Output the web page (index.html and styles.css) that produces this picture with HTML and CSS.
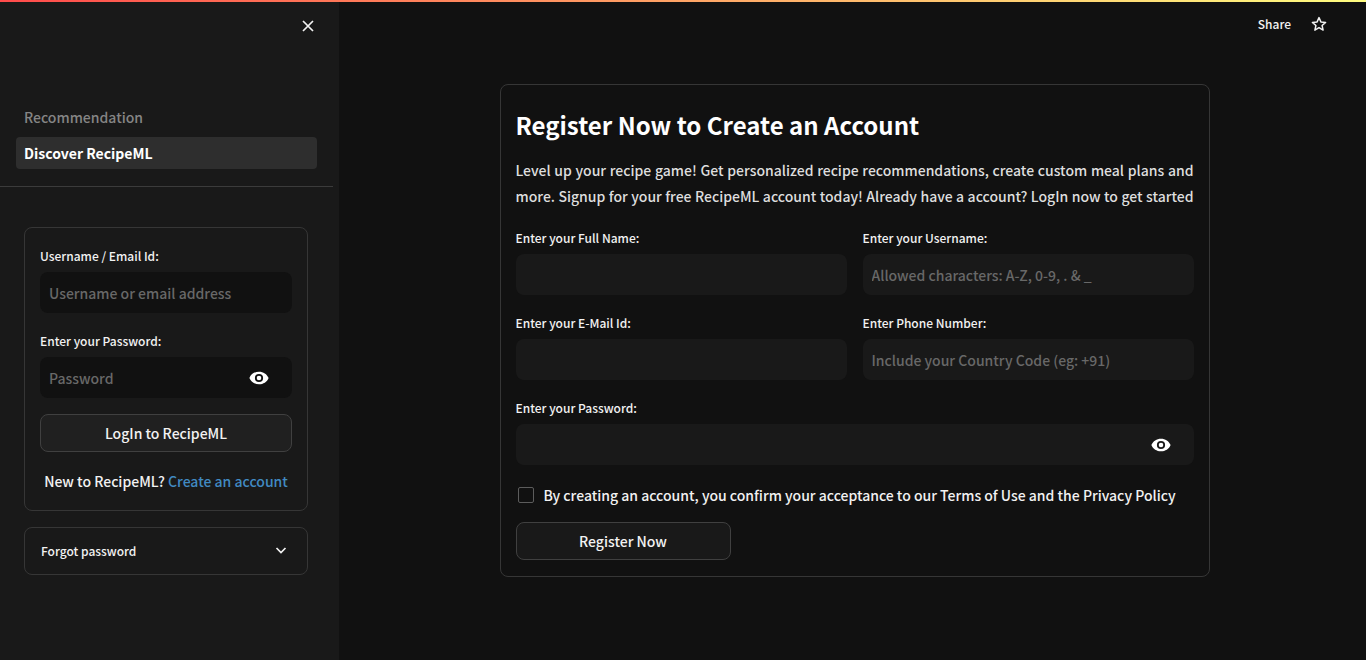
FILE: index.html
```html
<!DOCTYPE html>
<html lang="en">
<head>
<meta charset="utf-8">
<meta name="viewport" content="width=device-width, initial-scale=1">
<title>RecipeML</title>
<link rel="stylesheet" href="styles.css">
</head>
<body>
<div class="accent"></div>
<div class="app">
  <aside class="sidebar">
    <button class="close" type="button" aria-label="Close sidebar">
      <svg viewBox="0 0 12 12" width="12" height="12"><path d="M1 1l10 10M11 1L1 11" fill="none" stroke="currentColor" stroke-width="1.7"/></svg>
    </button>
    <nav class="nav">
      <a class="nav-link" href="#">Recommendation</a>
      <a class="nav-link nav-link-active" href="#">Discover RecipeML</a>
    </nav>
    <div class="sidebar-body">
      <form class="card login">
        <div class="field">
          <label for="login-user">Username / Email Id:</label>
          <input class="text-input" id="login-user" type="text" placeholder="Username or email address">
        </div>
        <div class="field">
          <label for="login-pass">Enter your Password:</label>
          <div class="text-input password">
            <input id="login-pass" type="password" placeholder="Password">
            <button class="eye" type="button" aria-label="Show password">
              <svg viewBox="0 0 20 14" width="20" height="14"><path fill="currentColor" fill-rule="evenodd" d="M10 .7C5.700 .7 2 3 .4 7 2 11 5.700 13.300 10 13.300s8-2.300 9.600-6.300C18 3 14.300 .7 10 .7zM10 11.100a4.100 4.100 0 1 1 0-8.200 4.100 4.100 0 0 1 0 8.200zM10 4.700a2.300 2.300 0 1 0 0 4.600 2.300 2.300 0 0 0 0-4.600z"/></svg>
            </button>
          </div>
        </div>
        <button class="button button-wide" type="button">LogIn to RecipeML</button>
        <p class="signup">New to RecipeML? <a href="#register">Create an account</a></p>
      </form>
      <button class="card expander" type="button">
        <span>Forgot password</span>
        <svg viewBox="0 0 12 8" width="12" height="8"><path d="M1.500 1L6 5.500 10.500 1" fill="none" stroke="currentColor" stroke-width="1.700"/></svg>
      </button>
    </div>
  </aside>
  <main class="main">
    <header class="toolbar">
      <button class="tool" type="button">Share</button>
      <button class="tool" type="button" aria-label="Favorite">
        <svg viewBox="0 0 16 16" width="16" height="16"><path d="M8 1.600l1.900 4.300 4.700.5-3.500 3.100 1 4.600L8 11.700l-4.100 2.400 1-4.600L1.400 6.400l4.700-.5z" fill="none" stroke="currentColor" stroke-width="1.500" stroke-linejoin="round"/></svg>
      </button>
    </header>
    <form class="card register" id="register">
      <h1>Register Now to Create an Account</h1>
      <p class="intro">Level up your recipe game! Get personalized recipe recommendations, create custom meal plans and more. Signup for your free RecipeML account today! Already have a account? LogIn now to get started</p>
      <div class="grid">
        <div class="field">
          <label for="name">Enter your Full Name:</label>
          <input class="text-input" id="name" type="text">
        </div>
        <div class="field">
          <label for="user">Enter your Username:</label>
          <input class="text-input" id="user" type="text" placeholder="Allowed characters: A-Z, 0-9, . &amp; _">
        </div>
        <div class="field">
          <label for="email">Enter your E-Mail Id:</label>
          <input class="text-input" id="email" type="text">
        </div>
        <div class="field">
          <label for="phone">Enter Phone Number:</label>
          <input class="text-input" id="phone" type="text" placeholder="Include your Country Code (eg: +91)">
        </div>
        <div class="field field-full">
          <label for="pass">Enter your Password:</label>
          <div class="text-input password">
            <input id="pass" type="password">
            <button class="eye" type="button" aria-label="Show password">
              <svg viewBox="0 0 20 14" width="20" height="14"><path fill="currentColor" fill-rule="evenodd" d="M10 .7C5.700 .7 2 3 .4 7 2 11 5.700 13.300 10 13.300s8-2.300 9.600-6.300C18 3 14.300 .7 10 .7zM10 11.100a4.100 4.100 0 1 1 0-8.200 4.100 4.100 0 0 1 0 8.200zM10 4.700a2.300 2.300 0 1 0 0 4.600 2.300 2.300 0 0 0 0-4.600z"/></svg>
            </button>
          </div>
        </div>
      </div>
      <div class="terms">
        <input id="terms" type="checkbox">
        <label for="terms">By creating an account, you confirm your acceptance to our Terms of Use and the Privacy Policy</label>
      </div>
      <button class="button" type="button">Register Now</button>
    </form>
  </main>
</div>
</body>
</html>
```

FILE: styles.css
```css
* {
  box-sizing: border-box;
}

body {
  margin: 0;
  background: #111;
  color: #f2f2f2;
  font: 500 14px/24px "Noto Sans CJK SC", "Noto Sans", sans-serif;
}

button,
input {
  font: inherit;
  color: inherit;
}

button {
  padding: 0;
  border: 0;
  background: none;
  cursor: pointer;
}

svg {
  display: block;
}

.accent {
  height: 2px;
  background: linear-gradient(90deg, #ff4b4b, #fffd80);
}

.app {
  display: flex;
  min-height: calc(100vh - 2px);
}

.sidebar {
  flex: 0 0 339px;
  display: flex;
  flex-direction: column;
  background: #191919;
}

.close {
  align-self: flex-end;
  margin: 12px 19px 0 0;
  padding: 6px;
}

.nav {
  display: flex;
  flex-direction: column;
  gap: 4px;
  margin-right: 6px;
  padding: 63px 16px 17px;
  border-bottom: 1px solid #3b3b3b;
}

.nav-link {
  padding: 4px 8px;
  border-radius: 4px;
  color: #858585;
  text-decoration: none;
}

.nav-link-active {
  background: #2e2e2e;
  color: #fff;
  font-weight: 700;
}

.sidebar-body {
  display: flex;
  flex-direction: column;
  gap: 16px;
  padding: 40px 31px 16px 24px;
}

.card {
  padding: 16px 15px;
  border: 1px solid #363636;
  border-radius: 8px;
}

.login {
  display: flex;
  flex-direction: column;
  gap: 16px;
}

.field {
  display: flex;
  flex-direction: column;
  gap: 4px;
}

.field label {
  font-size: 12px;
  line-height: 24px;
}

.text-input {
  width: 100%;
  height: 41px;
  padding: 0 9px;
  border: 0;
  border-radius: 8px;
  outline: 0;
  background: #191919;
}

.sidebar .text-input {
  background: #111;
}

.password {
  display: flex;
  align-items: center;
  padding-right: 23px;
}

.password input {
  flex: 1;
  min-width: 0;
  padding: 0;
  border: 0;
  outline: 0;
  background: none;
}

.eye {
  color: #fff;
}

::placeholder {
  color: #686868;
  opacity: 1;
}

.button {
  width: 215px;
  height: 38px;
  border: 1px solid #404040;
  border-radius: 8px;
  background: #191919;
}

.button-wide {
  width: 100%;
  background: #202020;
}

.signup {
  margin: 0;
  padding: 1px 0;
  text-align: center;
}

.signup a {
  color: #418ac2;
  text-decoration: none;
}

.expander {
  display: flex;
  align-items: center;
  justify-content: space-between;
  height: 48px;
  padding: 0 20px 0 16px;
  font-size: 12px;
}

.main {
  flex: 1;
  min-width: 0;
  padding: 0 16px 16px 20px;
}

.toolbar {
  display: flex;
  justify-content: flex-end;
  gap: 20px;
  padding: 10px 23px 48px 0;
}

.tool {
  font-size: 12px;
}

.register {
  max-width: 710px;
  margin: 0 auto;
}

.register h1 {
  margin: 0;
  padding: 8px 0 16px;
  color: #fff;
  font-size: 24px;
  line-height: 32px;
  font-weight: 700;
}

.intro {
  margin: 0 0 17px;
  color: #dedede;
  line-height: 26px;
  text-align: justify;
  text-align-last: justify;
}

.grid {
  display: grid;
  grid-template-columns: 1fr 1fr;
  gap: 16px;
}

.field-full {
  grid-column: 1 / -1;
}

.terms {
  display: flex;
  align-items: center;
  gap: 10px;
  padding: 18px 0 15px 2px;
}

.terms input {
  appearance: none;
  width: 16px;
  height: 16px;
  margin: 0;
  border: 1px solid #5c5c5c;
  border-radius: 2px;
}
```
